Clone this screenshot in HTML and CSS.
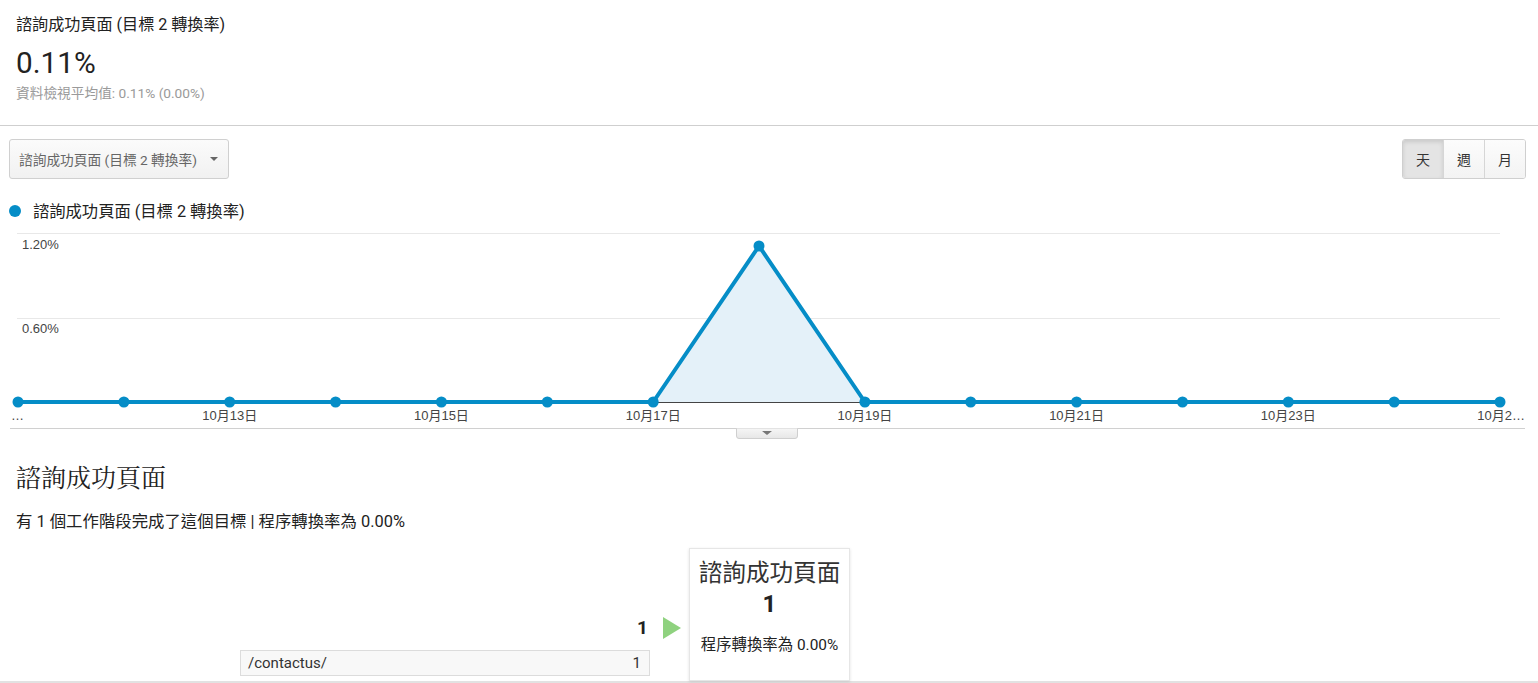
FILE: index.html
```html
<!DOCTYPE html>
<html lang="zh-Hant">
<head>
<meta charset="utf-8">
<title>諮詢成功頁面</title>
<link rel="stylesheet" href="styles.css">
</head>
<body>
<section class="summary">
  <div class="summary-title">諮詢成功頁面 (目標 2 轉換率)</div>
  <div class="summary-value">0.11%</div>
  <div class="summary-sub">資料檢視平均值: 0.11% (0.00%)</div>
</section>

<div class="controls">
  <div class="dropdown">
    <span>諮詢成功頁面 (目標 2 轉換率)</span>
    <span class="caret"></span>
  </div>
  <div class="btn-group">
    <span class="btn active">天</span>
    <span class="btn">週</span>
    <span class="btn">月</span>
  </div>
</div>

<div class="legend">
  <span class="legend-dot"></span>
  <span>諮詢成功頁面 (目標 2 轉換率)</span>
</div>

<svg class="chart" width="1538" height="215" viewBox="0 0 1538 215">
  <line x1="17" y1="8.5" x2="1500" y2="8.5" stroke="#e8e8e8" stroke-width="1"/>
  <line x1="17" y1="93.5" x2="1500" y2="93.5" stroke="#e8e8e8" stroke-width="1"/>
  <text class="ylab" x="22" y="24">1.20%</text>
  <text class="ylab" x="22" y="108">0.60%</text>
  <polygon points="653.2,177 759,21 864.9,177" fill="#e4f1f9"/>
  <line x1="653.2" y1="177.5" x2="864.9" y2="177.5" stroke="#444" stroke-width="1"/>
  <polyline fill="none" stroke="#058dc7" stroke-width="4" stroke-linejoin="round"
    points="18,177 653.2,177 759,21 864.9,177 1500,177"/>
  <g fill="#058dc7">
    <circle cx="18" cy="177" r="5.5"/>
    <circle cx="123.9" cy="177" r="5.5"/>
    <circle cx="229.7" cy="177" r="5.5"/>
    <circle cx="335.6" cy="177" r="5.5"/>
    <circle cx="441.4" cy="177" r="5.5"/>
    <circle cx="547.3" cy="177" r="5.5"/>
    <circle cx="653.2" cy="177" r="5.5"/>
    <circle cx="759" cy="21" r="5.5"/>
    <circle cx="864.9" cy="177" r="5.5"/>
    <circle cx="970.7" cy="177" r="5.5"/>
    <circle cx="1076.6" cy="177" r="5.5"/>
    <circle cx="1182.5" cy="177" r="5.5"/>
    <circle cx="1288.3" cy="177" r="5.5"/>
    <circle cx="1394.2" cy="177" r="5.5"/>
    <circle cx="1500" cy="177" r="5.5"/>
  </g>
  <g class="xlab">
    <text x="11" y="195">…</text>
    <text x="229.7" y="195" text-anchor="middle">10月13日</text>
    <text x="441.4" y="195" text-anchor="middle">10月15日</text>
    <text x="653.2" y="195" text-anchor="middle">10月17日</text>
    <text x="864.9" y="195" text-anchor="middle">10月19日</text>
    <text x="1076.6" y="195" text-anchor="middle">10月21日</text>
    <text x="1288.3" y="195" text-anchor="middle">10月23日</text>
    <text x="1525" y="195" text-anchor="end">10月2…</text>
  </g>
  <line x1="10" y1="203.5" x2="1525" y2="203.5" stroke="#d0d0d0" stroke-width="1"/>
  <defs>
    <linearGradient id="tabg" x1="0" y1="0" x2="0" y2="1">
      <stop offset="0" stop-color="#f6f6f6"/>
      <stop offset="1" stop-color="#e6e6e6"/>
    </linearGradient>
  </defs>
  <path d="M736.5 203.5 V211 Q736.5 213.5 739 213.5 H795 Q797.5 213.5 797.5 211 V203.5" fill="url(#tabg)" stroke="#cfcfcf" stroke-width="1"/>
  <polygon points="762,206 772,206 767,210" fill="#777"/>
</svg>

<section class="goal">
  <h2 class="goal-title">諮詢成功頁面</h2>
  <p class="goal-desc">有 1 個工作階段完成了這個目標 | 程序轉換率為 0.00%</p>
  <div class="funnel">
    <div class="sources">
      <div class="sources-total">1</div>
      <div class="source-row">
        <span>/contactus/</span>
        <span>1</span>
      </div>
    </div>
    <div class="arrow-col"><span class="arrow"></span></div>
    <div class="step">
      <div class="step-title">諮詢成功頁面</div>
      <div class="step-count">1</div>
      <div class="step-rate">程序轉換率為 0.00%</div>
    </div>
  </div>
</section>
<div class="footer-rule"></div>
</body>
</html>
```

FILE: styles.css
```css
html, body {
  margin: 0;
  padding: 0;
  background: #fff;
}
body {
  font-family: Roboto, "Noto Sans CJK TC", sans-serif;
  color: #222;
  overflow: hidden;
}

.summary {
  padding: 15px 16px 24px;
  border-bottom: 1px solid #cfcfcf;
}
.summary-title {
  font-size: 16.1px;
  line-height: 20px;
  color: #222;
}
.summary-value {
  margin-top: 11px;
  font-size: 29.7px;
  line-height: 34px;
  color: #222;
}
.summary-sub {
  margin-top: 5px;
  font-size: 13.7px;
  line-height: 16px;
  color: #9a9a9a;
}

.controls {
  display: flex;
  justify-content: space-between;
  align-items: center;
  margin-top: 13px;
  padding: 0 12px 0 9px;
}
.dropdown {
  display: flex;
  align-items: center;
  justify-content: space-between;
  box-sizing: border-box;
  width: 220px;
  height: 40px;
  padding: 0 10px 0 9px;
  border: 1px solid #d0d0d0;
  border-radius: 3px;
  background: linear-gradient(#fbfbfb, #f1f1f1);
  font-size: 13.7px;
  color: #666;
}
.caret {
  width: 0;
  height: 0;
  border-left: 4px solid transparent;
  border-right: 4px solid transparent;
  border-top: 4px solid #666;
}
.btn-group {
  display: flex;
  height: 40px;
  box-sizing: border-box;
  border: 1px solid #cfcfcf;
  border-radius: 3px;
  overflow: hidden;
}
.btn {
  display: flex;
  align-items: center;
  justify-content: center;
  width: 40px;
  font-size: 14px;
  color: #333;
  background: linear-gradient(#fcfcfc, #f3f3f3);
  border-left: 1px solid #d6d6d6;
}
.btn:first-child {
  border-left: none;
}
.btn.active {
  background: #e4e4e4;
  box-shadow: inset 0 2px 4px rgba(0,0,0,0.12);
}

.legend {
  display: flex;
  align-items: center;
  gap: 12px;
  margin-top: 23px;
  padding-left: 9px;
  font-size: 16.3px;
  line-height: 20px;
  color: #222;
}
.legend-dot {
  width: 12px;
  height: 12px;
  border-radius: 50%;
  background: #058dc7;
  margin-top: -2px;
}

.chart {
  display: block;
  margin-top: 3px;
}
.ylab {
  font-family: "Liberation Sans", "Noto Sans CJK TC", sans-serif;
  font-size: 13px;
  fill: #444;
}
.xlab text {
  font-family: "Liberation Sans", "Noto Sans CJK TC", sans-serif;
  font-size: 13px;
  fill: #444;
}

.goal {
  padding-left: 16px;
}
.goal-title {
  margin: 21px 0 0;
  font-family: "Noto Serif CJK TC", "Liberation Serif", "Noto Sans CJK TC", serif;
  font-weight: normal;
  font-size: 25px;
  line-height: 30px;
  color: #222;
}
.goal-desc {
  margin: 21px 0 0;
  font-size: 16.4px;
  line-height: 20px;
  color: #222;
}

.funnel {
  display: flex;
  margin-top: 16px;
  margin-left: 224px;
}
.sources {
  display: flex;
  flex-direction: column;
  justify-content: flex-end;
  width: 410px;
}
.sources-total {
  text-align: right;
  padding-right: 2px;
  font-size: 19px;
  font-weight: bold;
  line-height: 22px;
  color: #222;
}
.source-row {
  display: flex;
  justify-content: space-between;
  align-items: center;
  box-sizing: border-box;
  height: 26px;
  margin-top: 11px;
  margin-bottom: 5px;
  padding: 0 8px 0 7px;
  background: #f8f8f8;
  border: 1px solid #dcdcdc;
  font-size: 15px;
  color: #333;
}
.arrow-col {
  display: flex;
  align-items: flex-end;
  width: 39px;
  box-sizing: border-box;
  padding: 0 0 42px 13px;
}
.arrow {
  width: 0;
  height: 0;
  border-top: 11px solid transparent;
  border-bottom: 11px solid transparent;
  border-left: 18px solid #8fd27f;
}
.step {
  box-sizing: border-box;
  width: 161px;
  height: 133px;
  padding: 9px 2px 0;
  border: 1px solid #e6e6e6;
  box-shadow: 0 1px 3px rgba(0,0,0,0.12);
  background: #fff;
  text-align: center;
}
.step-title {
  font-size: 23.6px;
  line-height: 30px;
  color: #333;
}
.step-count {
  margin-top: 2px;
  font-size: 24px;
  font-weight: bold;
  line-height: 28px;
  color: #222;
}
.step-rate {
  margin-top: 17px;
  font-size: 15.4px;
  line-height: 20px;
  color: #222;
}
.footer-rule {
  border-top: 2px solid #e2e2e2;
}
```
